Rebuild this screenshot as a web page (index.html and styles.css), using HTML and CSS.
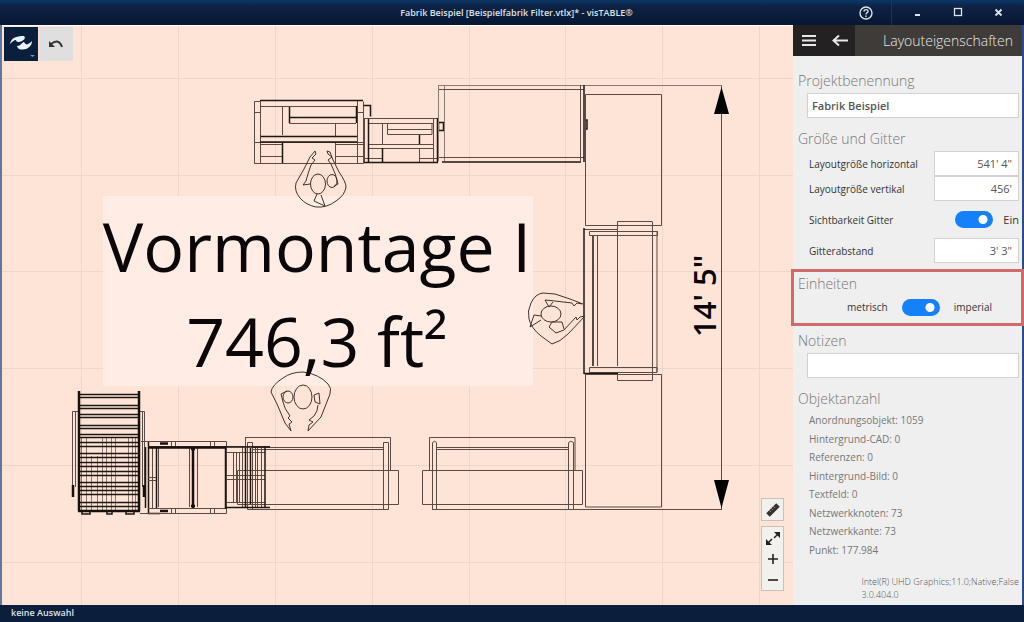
FILE: index.html
```html
<!DOCTYPE html>
<html lang="de">
<head>
<meta charset="utf-8">
<title>Fabrik Beispiel - visTABLE</title>
<link rel="stylesheet" href="styles.css">
</head>
<body>
<div class="app">
  <header class="titlebar">
    <h1 class="app-title">Fabrik Beispiel [Beispielfabrik Filter.vtlx]* - visTABLE®</h1>
    <button class="win-btn help" aria-label="Hilfe">
      <svg width="14" height="14" viewBox="0 0 14 14" fill="none" stroke="currentColor" stroke-width="1.4"><circle cx="7" cy="7" r="6"/><path d="M5 5.6C5 3 9 3 9 5.4C9 6.8 7 6.8 7 8.4M7 9.6V11"/></svg>
    </button>
    <button class="win-btn" aria-label="Minimieren">
      <svg width="12" height="12" viewBox="0 0 12 12"><path d="M3 8H8" stroke="currentColor" stroke-width="2"/></svg>
    </button>
    <button class="win-btn" aria-label="Maximieren">
      <svg width="12" height="12" viewBox="0 0 12 12"><rect x="2.5" y="1.5" width="7" height="7" fill="none" stroke="currentColor" stroke-width="1.3"/></svg>
    </button>
    <button class="win-btn" aria-label="Schließen">
      <svg width="12" height="12" viewBox="0 0 12 12"><path d="M2.500 2.500L8.500 8.500M8.500 2.500L2.500 8.500" stroke="currentColor" stroke-width="1.8"/></svg>
    </button>
  </header>

  <main class="workspace">
    <section class="canvas" aria-label="Layout">
      <svg class="drawing" viewBox="2 26 791 579" preserveAspectRatio="xMidYMid meet">
        <path class="grid" d="M81.500 25V605M178.500 25V605M275.500 25V605M372.500 25V605M469.500 25V605M565.500 25V605M662.500 25V605M759.500 25V605M2 78.500H793M2 175.500H793M2 271.500H793M2 368.500H793M2 465.500H793M2 562.500H793"/>
        <rect class="plate" x="103" y="196" width="430" height="190"/>

        <!-- upper left workbench -->
        <g class="line">
          <path d="M254.500 101.500H260.500V163.500H254.500ZM254.500 112.500H260.500M260 106.500H357M282.500 107V135M289.500 107V123.500H356M289.500 117.500H356M335.500 124V136M254.500 142.500H363M260.500 144.500H282M260.500 156.500H282M254.500 163.500H363.500V101.500M335.500 142V163M335.500 144.500H363M335.500 156.500H363M357.500 101V163M357.500 112.500H363.500"/>
          <path class="dark" d="M260 100.500H363M282.500 143V163M260.500 136.500H357M356.500 106V123M289.500 107V123M289 117.500H356M260 142H357M363.500 105.500H370.500V116.500"/>
        </g>
        <!-- second workbench -->
        <g class="line">
          <path d="M364.500 118.500H438M368.500 123.500H433M364.500 118V162M382.500 124V144M387.500 124V134.500H432V124M387.500 129.500H432M419.500 134V144M368 144.500H434M368 148.500H434M419.500 149V162M364.500 158.500H383M419.500 158.500H438M433.500 118V162"/>
          <path class="dark" d="M364 162.500H438M368.500 119V162M437.500 118V162M382.500 148V162M419.500 135V144M438.500 122.500H443.500V130.500H438.500Z"/>
        </g>
        <!-- large table -->
        <g class="line">
          <path class="soft" d="M438.500 85.500H722M444.500 85V161M438.500 85V161"/>
          <path d="M439 89.500H584M580.500 85V161M439 157.500H584"/>
          <path class="dark" d="M442 162H581M584 85V162M585 120H587V129H585"/>
          <path d="M585.500 94.500H661.500V225.500H585.500Z"/>
        </g>
        <!-- right conveyor table -->
        <g class="line">
          <path d="M584 229.500H618M589.500 231.500H657.500V235.500H589.500ZM597.500 236V366M617.500 222V366M652.500 222V376M657 231V372M617.500 230V221.500H652.500M589.500 367.500H657V372.500H589.500ZM617.500 373V380.500H652.500V372"/>
          <path class="dark" d="M584 228V374M584 373.500H618M593 236V366"/>
          <path d="M585.500 374.500H661.500V507H585.500Z"/>
        </g>
        <!-- lower middle tables -->
        <g class="line">
          <path d="M245.500 445V437.500H390.500V471M252 447.500H384M252 449.500H384M237.500 470.500H398.500V504.500H237.500ZM383.500 442.500H388.500V509.500H383.500ZM247.500 442.500H252.500V509.500H247.500ZM245.500 437V504M248 509.500H388"/>
          <path d="M429.500 470V437.500H575V470M437 447.500H568M437 449.500H568M422.500 470.500H582.500V504.500H422.500ZM432.500 442.500Q434.500 440 436.500 442.500V509.500H432.500ZM568.500 442.500Q570.500 440 573.500 442.500V509.500H568.500Z"/>
          <path d="M432 509.500H722"/>
        </g>
        <!-- lower left machine -->
        <g class="line">
          <path d="M79 411.500H72.500V496M139 411.500H144.500V496M75.500 412V487M142.500 412V487"/>
          <path class="soft" d="M81.500 438V510M86.500 438V510M91.500 456V510M97.500 456V510M102.500 438V510M106.500 438V510M111.500 438V510M115.500 438V510M128.500 438V510M132.500 438V510M135.500 438V510"/>
          <path class="dark" d="M78 394.500H140M79 397.500H139M79 405.500H139M79 408.500H139M79 414.500H139M79 417.500H139M79 425.500H139M79 428.500H139M79 434.500H139M79 437.500H139M80 442.500H138M79 446.500H139M79 453.500H139M79 457.500H139M79 462.500H139M79 466.500H139M79 471.500H139M79 475.500H139M79 482.500H139M79 486.500H139M79 490.500H139M79 494.500H139M79 502.500H139M79 506.500H139"/>
          <path class="heavy" d="M79 391V511M139 391V511M78 511H140M73 485V497M144 485V497"/>
          <path class="dark" d="M82 512V514H90V512M107 512V514H112V512M126 512V514H134V512M145.500 447V508M148.500 441V513.500H160M156.500 446V508"/>
          <path d="M141 441.500H226.500V513.500H140M148 446.500H226M148 508.500H226M152.500 448V508M171.500 441V446M175.500 441V446M210.500 441V446M214.500 441V446M171.500 508V513M175.500 508V513M210.500 508V513M214.500 508V513M148 477.500H156M148 480.500H156M158.500 448V507M189.500 448V507M197.500 448V507"/>
          <path class="heavy" d="M148 447.500H226M160 443.500H168M160 511H168M193 447V508M191 449H195M191 506H195"/>
          <path d="M226 446.500H270M226 452.500H265M226 475.500H265M226 479.500H265M226 502.500H265M233.500 452V502M236.500 452V502M239.500 452V502M242.500 447V507M255.500 448V507M257.500 448V507M261.500 448V507"/>
          <path class="dark" d="M225.500 446V509M245.500 448V507M265 446V508M222 447H270M226 507.500H270M250.500 448V504"/>
        </g>

        <!-- workers -->
        <g class="worker">
          <path d="M315 151L310 157L304 169L296 183Q294 191 300 198Q306 205 316 207Q327 208 336 201Q345 195 346 187Q346 182 339 172L333 160L330 152L327 151L328 154L332 157L328 160L331 164Q336 174 338 184L334 186M315 151L316 154L312 158L315 160L311 165Q308 173 306 181L303 185L310 184"/>
          <ellipse cx="318" cy="184" rx="7.500" ry="10"/><ellipse cx="332" cy="181" rx="5" ry="6.500"/>
          <path d="M317 194L314 201L325 206L321 195"/>
        </g>
        <g class="worker">
          <path d="M583 304L570 299L555 294L543 293Q535 294 531 303Q527 311 529 319Q531 328 541 336L552 344Q560 342 568 334L585 316L580 317L577 320L576 317L564 330L556 333L549 327L552 322L562 322L564 329M582 304L577 303L574 306L572 303L555 301L545 300L549 307L553 302M541 316L534 315L530 327L541 320"/>
          <ellipse cx="551" cy="314" rx="10" ry="8"/>
        </g>
        <g class="worker">
          <path d="M291 431L285 423L277 404L271 392Q272 385 283 378Q291 372 303 372Q319 374 328 384Q332 388 330 394L321 417L308 431L309 425L313 422L309 420L314 416Q318 411 318 405M291 431L289 424L292 422L288 418L290 416Q284 408 283 402L281 394L287 391M314 395L319 393L320 404L315 402Z"/>
          <ellipse cx="303" cy="397" rx="9" ry="12"/><ellipse cx="288" cy="397" rx="5" ry="6"/>
        </g>

        <!-- dimension line -->
        <path class="line" d="M721.500 86V509"/>
        <path d="M721.500 87L714 114H729ZM721.500 508L714 480H729Z"/>
        <text class="dimension" transform="translate(716 337) rotate(-90)">14' 5"</text>
        <text class="area-name" x="317" y="272">Vormontage I</text>
        <text class="area-name" x="317" y="367">746,3 ft²</text>
      </svg>

      <div class="tools">
        <button class="tool tool-active" aria-label="Auswahl">
          <svg width="34" height="34" viewBox="0 0 34 34"><path fill="#e8f4fa" d="M6 17C7 11 12 9 20 9C22 11 20 13 18 14C15 16 12 15 12 13C10 13 8 15 6 17ZM13 19C17 19 18 15 20 15C21 17 23 18 24 17C26 16 27 15 28 14C28 20 22 24 15 22C14 21 13 20 13 19Z"/><path fill="#7d91ad" d="M26 28H31L28.500 30Z"/></svg>
        </button>
        <button class="tool" aria-label="Rückgängig">
          <svg width="34" height="34" viewBox="0 0 34 34"><path d="M12 17Q20 11 23 20" fill="none" stroke="#333" stroke-width="2"/><path d="M10 14V20H16Z" fill="#333"/></svg>
        </button>
      </div>

      <div class="view-tools">
        <button class="view-btn view-box" aria-label="Messen">
          <svg width="20" height="20" viewBox="0 0 20 20"><path d="M5 15L15 5" stroke="#333" stroke-width="5"/><path d="M6 10L8 12M8 8L10 10M10 6L12 8" stroke="#888"/></svg>
        </button>
        <div class="view-box">
          <button class="view-btn" aria-label="Einpassen">
            <svg width="20" height="20" viewBox="0 0 20 20"><path d="M11 4H17V10ZM3 11V17H9Z" fill="#222"/><path d="M11 10L15 6M9 11L5 15" stroke="#222" stroke-width="1.500"/></svg>
          </button>
          <button class="view-btn" aria-label="Vergrößern">
            <svg width="20" height="20" viewBox="0 0 20 20"><path d="M5 10H15M10 5V15" stroke="#222" stroke-width="1.600"/></svg>
          </button>
          <button class="view-btn" aria-label="Verkleinern">
            <svg width="20" height="20" viewBox="0 0 20 20"><path d="M5 10H15" stroke="#222" stroke-width="1.600"/></svg>
          </button>
        </div>
      </div>
    </section>

    <aside class="panel">
      <header class="panel-head">
        <div class="panel-nav">
          <button class="nav-btn" aria-label="Menü">
            <svg width="14" height="14" viewBox="0 0 14 14"><path d="M0 2H14M0 6.500H14M0 11H14" stroke="currentColor" stroke-width="2"/></svg>
          </button>
          <button class="nav-btn" aria-label="Zurück">
            <svg width="16" height="14" viewBox="0 0 16 14"><path d="M16 6.500H2M7 1.500L1.500 6.500L7 11.500" fill="none" stroke="currentColor" stroke-width="2"/></svg>
          </button>
        </div>
        <h2 class="panel-title">Layouteigenschaften</h2>
      </header>
      <form class="panel-body">
        <h3 class="section-title"><label for="name">Projektbenennung</label></h3>
        <input class="field wide name" id="name" type="text" value="Fabrik Beispiel">

        <h3 class="section-title">Größe und Gitter</h3>
        <div class="row"><label for="width">Layoutgröße horizontal</label><input class="field" id="width" type="text" value="541' 4&quot;"></div>
        <div class="row"><label for="height">Layoutgröße vertikal</label><input class="field" id="height" type="text" value="456'"></div>
        <div class="row switch-row"><label for="grid">Sichtbarkeit Gitter</label><span class="switch-value"><input class="switch" id="grid" type="checkbox" checked><span>Ein</span></span></div>
        <div class="row"><label for="step">Gitterabstand</label><input class="field" id="step" type="text" value="3' 3&quot;"></div>

        <section class="units">
          <h3 class="section-title">Einheiten</h3>
          <div class="units-row"><span>metrisch</span><input class="switch" id="units" type="checkbox" checked><label for="units">imperial</label></div>
        </section>

        <h3 class="section-title notes-title"><label for="notes">Notizen</label></h3>
        <input class="field wide" id="notes" type="text">

        <h3 class="section-title">Objektanzahl</h3>
        <ul class="counts">
          <li>Anordnungsobjekt: 1059</li>
          <li>Hintergrund-CAD: 0</li>
          <li>Referenzen: 0</li>
          <li>Hintergrund-Bild: 0</li>
          <li>Textfeld: 0</li>
          <li>Netzwerkknoten: 73</li>
          <li>Netzwerkkante: 73</li>
          <li>Punkt: 177.984</li>
        </ul>
        <p class="system">Intel(R) UHD Graphics;11.0;Native;False<br>3.0.404.0</p>
      </form>
    </aside>
  </main>

  <footer class="statusbar">keine Auswahl</footer>
</div>
</body>
</html>
```
FILE: styles.css
```css
* { box-sizing: border-box; }

body {
  margin: 0;
  font-family: "Open Sans", "Noto Sans", sans-serif;
  font-size: 10px;
  color: #333;
}

h1, h2, h3, p, ul { margin: 0; padding: 0; font-weight: 400; }
button { border: 0; padding: 0; background: none; color: inherit; display: grid; place-items: center; }
svg { display: block; }

.app {
  min-height: 100vh;
  display: grid;
  grid-template-rows: 25px 1fr 17px;
  background: #0b1f3d;
}

/* Title bar */
.titlebar {
  display: grid;
  grid-template-columns: 1fr 51px 51px 30px 51px;
  align-items: center;
  background: linear-gradient(#0b3868, #0d2343 25%, #071733);
  color: #dce3ec;
}
.app-title {
  padding-left: 192px;
  text-align: center;
  font-size: 9px;
  line-height: 24px;
  font-weight: 600;
}
.win-btn { height: 24px; }
.help { border-right: 1px solid #18365a; }

/* Workspace */
.workspace {
  display: grid;
  grid-template-columns: 1fr 229px;
  border-left: 2px solid #6078a0;
  border-right: 2px solid #2f4b86;
}
.canvas {
  position: relative;
  min-width: 0;
  background: #fee4d7;
  border-top: 1px solid #fff;
}
.drawing { width: 100%; height: 100%; }
.grid { fill: none; stroke: #f0d5c9; }
.plate { fill: #ffece4; }
.line { fill: none; stroke: #5b4a43; }
.soft { stroke: #8b7b73; }
.dark { stroke: #1e1613; stroke-width: 1.5; }
.heavy { stroke: #15100e; stroke-width: 2.5; }
.worker { fill: none; stroke: #40332e; stroke-width: 1; }
.area-name { font-size: 68px; text-anchor: middle; fill: #0b0708; }
.dimension { font-size: 31px; font-weight: 600; fill: #0b0708; }

.tools { position: absolute; left: 2px; top: 1px; display: flex; gap: 1px; }
.tool { width: 34px; height: 34px; background: #dfdfdf; }
.tool-active { background: #0a1f3c; }

.view-tools { position: absolute; right: 9px; bottom: 14px; display: grid; gap: 5px; }
.view-box {
  background: #f3f1ee;
  border: 1px solid #c9c0ba;
}
.view-btn { width: 21px; height: 21px; }
.view-btn.view-box { width: 23px; height: 23px; }

/* Properties panel */
.panel {
  position: relative;
  display: flex;
  flex-direction: column;
  background: #efefef;
}
.panel-head {
  display: flex;
  height: 31px;
  background: #3e3b39;
  color: #e8e8e8;
}
.panel-nav { display: flex; width: 62px; background: #242122; }
.nav-btn { flex: 1; }
.panel-title {
  flex: 1;
  padding-right: 9px;
  line-height: 31px;
  text-align: right;
  font-size: 14px;
  font-weight: 300;
}
.panel-body {
  flex: 1;
  display: flex;
  flex-direction: column;
  padding: 4px 3px 4px 5px;
}
.section-title {
  margin-top: 9px;
  line-height: 24px;
  font-size: 14px;
  font-weight: 300;
  color: #777;
}
.field {
  width: 85px;
  height: 25px;
  padding: 0 6px;
  border: 1px solid #d2d2d2;
  border-radius: 0;
  background: #fff;
  font: 11px "Open Sans", sans-serif;
  color: #555;
  text-align: right;
}
.field.wide { width: auto; margin-left: 9px; padding: 0 4px; text-align: left; }
.field.name { font-weight: 600; }
.row {
  display: flex;
  align-items: center;
  justify-content: space-between;
  padding-left: 11px;
}
.switch-row { height: 37px; }
.switch-value { display: flex; align-items: center; gap: 10px; font-size: 11px; }
.switch {
  appearance: none;
  width: 38px;
  height: 17px;
  margin: 0;
  border-radius: 9px;
  background: radial-gradient(circle at 28px 50%, #fff 4px, #1480fa 5px);
}
.units {
  margin: 6px -5px 0 -7px;
  padding: 0 4px 5px;
  border: 3px solid #d2696b;
}
.units .section-title { margin-top: 0; }
.units-row {
  display: flex;
  align-items: center;
  justify-content: center;
  gap: 14px;
  height: 22px;
  padding-left: 24px;
}
.notes-title { margin-top: 3px; }
.counts {
  flex: 1;
  display: flex;
  flex-direction: column;
  justify-content: space-between;
  padding-left: 11px;
  list-style: none;
  line-height: 18px;
  color: #777;
}
.system {
  align-self: flex-end;
  margin-top: 16px;
  line-height: 13px;
  font-size: 9px;
  font-weight: 300;
  color: #555;
}

/* Status bar */
.statusbar {
  padding-left: 11px;
  line-height: 16px;
  font-size: 9px;
  font-weight: 600;
  color: #dce3ec;
}
```
